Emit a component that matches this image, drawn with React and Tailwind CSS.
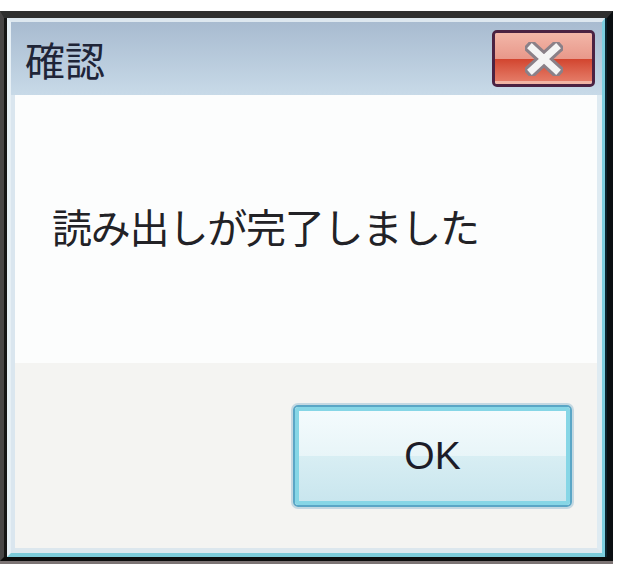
import React from "react";

export default function App() {
  return (
    <div className="w-[620px] h-[571px] bg-white overflow-hidden">
      <div className="mt-[11px] w-[613px] h-[550px] flex flex-col border-t-[7px] border-t-[#2f2f2f] border-l-[4px] border-l-[#474545] border-r-[6px] border-r-[#0b0f12] border-b-[4px] border-b-[#0d0d0d] shadow-[0_3px_0_#7c7474]">
        <div className="flex-1 flex flex-col border-l-[3px] border-l-[#141414] border-r-[2px] border-r-[#0c2630]">
          <div className="flex-1 flex flex-col border-t-[4px] border-t-[#dde7ef] border-l-[4px] border-l-[#e6eff5] border-r-[3px] border-r-[#7dcfe0] border-b-[4px] border-b-[#7ccbd9]">
            {/* Title bar */}
            <div className="h-[73px] flex items-center justify-between bg-gradient-to-b from-[#a8bbd0] to-[#c8dae8] pl-[14px] pr-[7px]">
              <span
                className="text-[40px] leading-none text-[#1f2538] tracking-[0px]"
                style={{ fontFamily: '"Noto Sans CJK JP", "Noto Sans", sans-serif' }}
              >
                確認
              </span>
              <div className="w-[103px] h-[57px] rounded-[5px] border-[3px] border-[#4b2242] overflow-hidden flex flex-col relative">
                <div className="h-1/2 bg-gradient-to-b from-[#f2b6a8] to-[#e8988a]" />
                <div className="h-1/2 bg-gradient-to-b from-[#d2442e] to-[#e47a66] border-b-[3px] border-b-[#f0b4a4]" />
                <svg
                  className="absolute left-1/2 top-1/2 -translate-x-1/2 -translate-y-1/2"
                  width="38"
                  height="34"
                  viewBox="0 0 38 34"
                >
                  <path d="M7 6 L31 28 M31 6 L7 28" stroke="#8a8088" strokeWidth="13" strokeLinecap="square" />
                  <path d="M7 6 L31 28 M31 6 L7 28" stroke="#f4f4f4" strokeWidth="7" strokeLinecap="square" />
                </svg>
              </div>
            </div>
            {/* Body */}
            <div className="flex-1 flex flex-col border-l-[4px] border-l-[#dae6ef] border-r-[5px] border-r-[#dfebf2] border-b-[5px] border-b-[#dce7ee]">
              <div className="h-[268px] bg-[#fcfdfd] flex items-center pl-[37px] pb-[6px]">
                <span
                  className="text-[40px] leading-none text-[#222226] tracking-[-1.2px]"
                  style={{ fontFamily: '"Noto Sans CJK JP", "Noto Sans", sans-serif' }}
                >
                  読み出しが完了しました
                </span>
              </div>
              <div className="flex-1 bg-[#f4f4f2] flex items-center justify-end pr-[25px]">
                <div className="w-[279px] h-[102px] rounded-[5px] border-[2px] border-[#5aa6c6] shadow-[0_0_0_2px_#c4d8e2] p-[0px]">
                  <div className="w-full h-full rounded-[3px] border-[4px] border-[#86d6e6] flex flex-col relative overflow-hidden">
                    <div className="h-1/2 bg-gradient-to-b from-[#f4fbfd] to-[#e8f5f8]" />
                    <div className="h-1/2 bg-gradient-to-b from-[#d8eef3] to-[#c9e6ee]" />
                    <span
                      className="absolute inset-0 flex items-center justify-center text-[39px] leading-none text-[#1c1c28]"
                      style={{ fontFamily: '"Liberation Sans", Arial, sans-serif' }}
                    >
                      OK
                    </span>
                  </div>
                </div>
              </div>
            </div>
          </div>
        </div>
      </div>
    </div>
  );
}
